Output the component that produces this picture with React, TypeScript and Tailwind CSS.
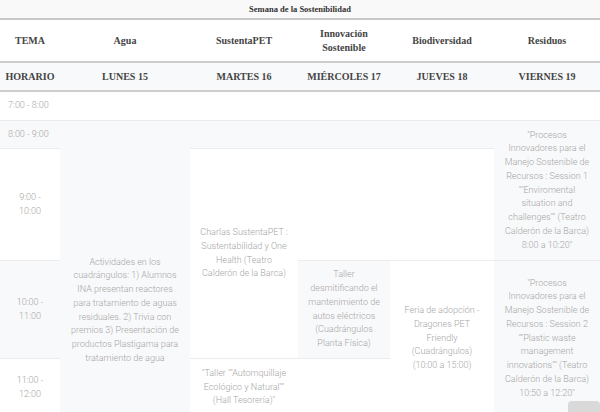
import React from "react";

const cols = "grid grid-cols-[60px_130px_108px_92px_104px_106px]";
const body =
  "flex items-center justify-center text-center px-2 py-2 border-t border-[#ececec] text-[9px] leading-[13.75px] text-[#a6a6a6] font-light";
const G = "bg-[#f8f9fa]";
const W = "bg-white";
const head =
  "flex items-center justify-center text-center px-2 text-[10px] leading-[14px] font-semibold text-[#444]";

export default function App() {
  return (
    <div className="relative w-[600px] h-[412px] overflow-hidden bg-white font-['Roboto',sans-serif]">
      <div className="font-['Liberation_Serif',serif]">
        <div className="h-[20px] bg-[#f9f9f9] border-b-2 border-[#c9c9c9] flex items-center justify-center text-[8.5px] font-semibold text-[#333]">
          Semana de la Sostenibilidad
        </div>
        <div className={`${cols} h-[43px] border-b-2 border-[#cdcdcd] bg-white`}>
          <div className={head}>TEMA</div>
          <div className={head}>Agua</div>
          <div className={head}>SustentaPET</div>
          <div className={head}>
            Innovación
            <br />
            Sostenible
          </div>
          <div className={head}>Biodiversidad</div>
          <div className={head}>Residuos</div>
        </div>
        <div className={`${cols} h-[29px] border-b-2 border-[#cdcdcd] ${G}`}>
          <div className={head}>HORARIO</div>
          <div className={head}>LUNES 15</div>
          <div className={head}>MARTES 16</div>
          <div className={head}>MIÉRCOLES 17</div>
          <div className={head}>JUEVES 18</div>
          <div className={head}>VIERNES 19</div>
        </div>
      </div>

      <div className={`${cols} grid-rows-[28px_28px_112px_98px_58px_84px]`}>
        {/* 7:00 row */}
        <div className={`${body} border-t-0 justify-start text-left col-start-1 row-start-1 ${W}`}>7:00 - 8:00</div>
        <div className={`${body} border-t-0 col-start-2 row-start-1 ${W}`} />
        <div className={`${body} border-t-0 col-start-3 row-start-1 ${W}`} />
        <div className={`${body} border-t-0 col-start-4 row-start-1 ${W}`} />
        <div className={`${body} border-t-0 col-start-5 row-start-1 ${W}`} />
        <div className={`${body} border-t-0 col-start-6 row-start-1 ${W}`} />

        {/* 8:00 row */}
        <div className={`${body} justify-start text-left col-start-1 row-start-2 ${G}`}>8:00 - 9:00</div>
        <div className={`${body} col-start-2 row-start-2 row-span-5 ${G}`}>
          Actividades en los cuadrángulos: 1) Alumnos INA presentan reactores para tratamiento de aguas residuales. 2) Trivia con premios 3) Presentación de productos Plastigama para tratamiento de agua
        </div>
        <div className={`${body} col-start-3 row-start-2 ${G}`} />
        <div className={`${body} col-start-4 row-start-2 ${G}`} />
        <div className={`${body} col-start-5 row-start-2 ${G}`} />
        <div className={`${body} col-start-6 row-start-2 row-span-2 ${G}`}>
          "Procesos Innovadores para el Manejo Sostenible de Recursos : Session 1 ""Enviromental situation and challenges"" (Teatro Calderón de la Barca) 8:00 a 10:20"
        </div>

        {/* 9:00 row */}
        <div className={`${body} col-start-1 row-start-3 ${W}`}>9:00 - 10:00</div>
        <div className={`${body} col-start-3 row-start-3 row-span-2 ${W}`}>
          Charlas SustentaPET : Sustentabilidad y One Health (Teatro Calderón de la Barca)
        </div>
        <div className={`${body} col-start-4 row-start-3 ${W}`} />
        <div className={`${body} col-start-5 row-start-3 ${W}`} />

        {/* 10:00 row */}
        <div className={`${body} col-start-1 row-start-4 ${G}`}>10:00 - 11:00</div>
        <div className={`${body} col-start-4 row-start-4 ${G}`}>
          Taller desmitificando el mantenimiento de autos eléctricos (Cuadrángulos Planta Física)
        </div>
        <div className={`${body} px-3 col-start-5 row-start-4 row-span-2 ${W}`}>
          Feria de adopción - Dragones PET Friendly (Cuadrángulos) (10:00 a 15:00)
        </div>
        <div className={`${body} col-start-6 row-start-4 row-span-2 ${G}`}>
          "Procesos Innovadores para el Manejo Sostenible de Recursos : Session 2 ""Plastic waste management innovations"" (Teatro Calderón de la Barca) 10:50 a 12:20"
        </div>

        {/* 11:00 row */}
        <div className={`${body} col-start-1 row-start-5 ${W}`}>11:00 - 12:00</div>
        <div className={`${body} col-start-3 row-start-5 ${W}`}>
          "Taller ""Automquillaje Ecológico y Natural"" (Hall Tesorería)"
        </div>
        <div className={`${body} col-start-4 row-start-5 ${W}`} />

        {/* 12:00 row */}
        <div className={`${body} col-start-1 row-start-6 ${G}`}>12:00 - 13:00</div>
        <div className={`${body} col-start-3 row-start-6 ${G}`} />
        <div className={`${body} col-start-4 row-start-6 ${G}`} />
        <div className={`${body} col-start-5 row-start-6 ${G}`} />
        <div className={`${body} col-start-6 row-start-6 ${G}`} />
      </div>

      <div className="absolute right-0 top-[401px] w-[32px] h-[14px] rounded-sm bg-[#d9d9d9]" />
    </div>
  );
}
